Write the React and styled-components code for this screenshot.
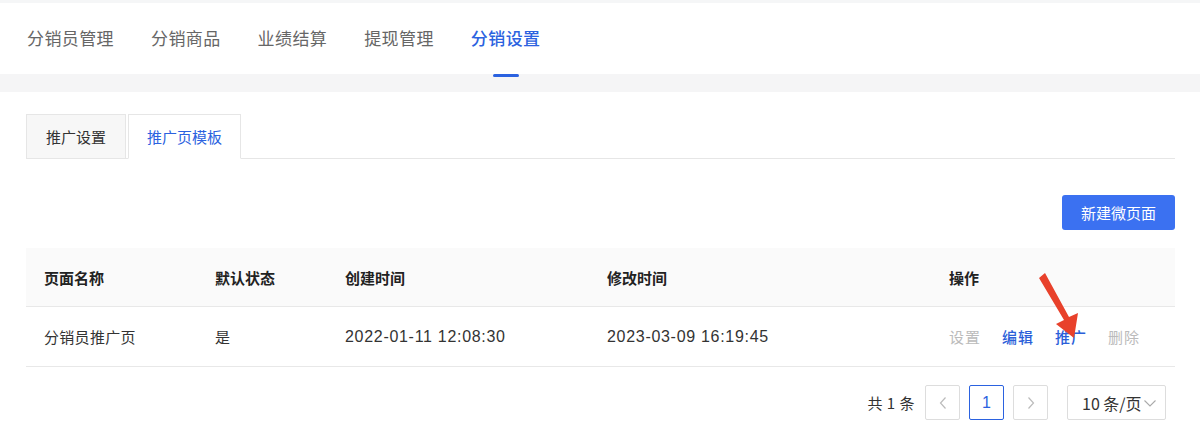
import React from 'react'
import styled, { createGlobalStyle } from 'styled-components'

const GlobalStyle = createGlobalStyle`
  html, body {
    margin: 0;
    padding: 0;
    background: #fff;
  }
  body {
    font-family: "Noto Sans CJK SC", "Liberation Sans", sans-serif;
    color: #333;
  }
  * { box-sizing: border-box; }
`

const Page = styled.div`
  position: relative;
  width: 1200px;
  height: 440px;
  overflow: hidden;
  background: #fff;
  border-top: 3px solid #f5f6f7;
`

const Header = styled.div`
  display: flex;
  align-items: stretch;
  height: 71px;
  padding-left: 27px;
  gap: 37px;
`

const NavItem = styled.div`
  position: relative;
  display: flex;
  align-items: center;
  font-size: 17px;
  letter-spacing: 0.4px;
  color: ${p => (p.active ? '#2b62e0' : '#666')};
  font-weight: ${p => (p.active ? 500 : 400)};
  padding-bottom: 2px;
  &::after {
    content: '';
    display: ${p => (p.active ? 'block' : 'none')};
    position: absolute;
    left: 50%;
    bottom: -3px;
    width: 26px;
    height: 3px;
    margin-left: -13px;
    border-radius: 2px;
    background: #2b62e0;
  }
`

const Band = styled.div`
  height: 18px;
  background: #f5f5f6;
`

const Content = styled.div`
  padding: 22px 25px 0 26px;
`

const Tabs = styled.div`
  display: flex;
  gap: 2px;
  border-bottom: 1px solid #e6e6e6;
  height: 45px;
`

const Tab = styled.div`
  display: flex;
  align-items: center;
  height: 45px;
  padding: 0 ${p => p.pad}px;
  font-size: 15px;
  border: 1px solid #e6e6e6;
  border-bottom: ${p => (p.active ? '1px solid #fff' : '1px solid #e6e6e6')};
  background: ${p => (p.active ? '#fff' : '#f7f7f7')};
  color: ${p => (p.active ? '#2b62e0' : '#333')};
`

const Toolbar = styled.div`
  display: flex;
  justify-content: flex-end;
  margin-top: 36px;
`

const PrimaryButton = styled.button`
  height: 35px;
  width: 113px;
  border: none;
  border-radius: 3px;
  background: #3b71f1;
  color: #fff;
  font-family: inherit;
  font-size: 15px;
`

const Table = styled.div`
  margin-top: 18px;
`

const Row = styled.div`
  display: grid;
  grid-template-columns: 171px 130px 262px 342px 1fr;
  height: ${p => (p.head ? 59 : 60)}px;
  background: ${p => (p.head ? '#fafafa' : '#fff')};
  border-bottom: 1px solid #e8e8e8;
`

const Cell = styled.div`
  display: flex;
  align-items: center;
  padding-left: 18px;
  font-size: 15px;
  letter-spacing: ${p => (p.head ? 0 : 0.3)}px;
  font-weight: ${p => (p.head ? 700 : 400)};
  color: ${p => (p.head ? '#222' : '#333')};
`

const DateText = styled.span`
  font-family: "Liberation Sans", "Noto Sans CJK SC", sans-serif;
  font-size: 16px;
  letter-spacing: 0.7px;
`

const Actions = styled.div`
  display: flex;
  gap: 21px;
`

const Action = styled.span`
  font-size: 15px;
  letter-spacing: 1px;
  color: ${p => (p.disabled ? '#bbb' : '#2b5fd9')};
  font-weight: ${p => (p.disabled ? 400 : 500)};
`

const Pager = styled.div`
  display: flex;
  justify-content: flex-end;
  align-items: center;
  margin-top: 18px;
  padding-right: 9px;
  gap: 9px;
`

const Total = styled.span`
  font-size: 15px;
  color: #333;
  margin-right: 1px;
  letter-spacing: 0.5px;
`

const PageBtn = styled.div`
  width: 35px;
  height: 35px;
  display: flex;
  align-items: center;
  justify-content: center;
  border: 1px solid ${p => (p.active ? '#2b62e0' : '#ddd')};
  border-radius: 2px;
  color: ${p => (p.active ? '#2b62e0' : '#bbb')};
  font-family: "Liberation Sans", sans-serif;
  font-size: 16px;
`

const SizeSelect = styled.div`
  margin-left: 10px;
  width: 99px;
  height: 35px;
  display: flex;
  align-items: center;
  padding-left: 14px;
  gap: 1px;
  border: 1px solid #ddd;
  border-radius: 2px;
  font-size: 16px;
  color: #333;
`

const Arrow = styled.svg`
  position: absolute;
  left: 0;
  top: 0;
  pointer-events: none;
`

const Chevron = ({ dir }) => (
  <svg width="10" height="14" viewBox="0 0 10 14">
    <path
      d={dir === 'left' ? 'M7.5 1.5 L2.5 7 L7.5 12.5' : 'M2.5 1.5 L7.5 7 L2.5 12.5'}
      fill="none"
      stroke="#bbb"
      strokeWidth="1.2"
    />
  </svg>
)

const navs = ['分销员管理', '分销商品', '业绩结算', '提现管理', '分销设置']

export default function App() {
  return (
    <Page>
      <GlobalStyle />
      <Header>
        {navs.map((n, i) => (
          <NavItem key={n} active={i === 4}>{n}</NavItem>
        ))}
      </Header>
      <Band />
      <Content>
        <Tabs>
          <Tab pad={19}>推广设置</Tab>
          <Tab pad={18} active>推广页模板</Tab>
        </Tabs>
        <Toolbar>
          <PrimaryButton>新建微页面</PrimaryButton>
        </Toolbar>
        <Table>
          <Row head>
            <Cell head>页面名称</Cell>
            <Cell head>默认状态</Cell>
            <Cell head>创建时间</Cell>
            <Cell head>修改时间</Cell>
            <Cell head>操作</Cell>
          </Row>
          <Row>
            <Cell>分销员推广页</Cell>
            <Cell>是</Cell>
            <Cell><DateText>2022-01-11 12:08:30</DateText></Cell>
            <Cell><DateText>2023-03-09 16:19:45</DateText></Cell>
            <Cell>
              <Actions>
                <Action disabled>设置</Action>
                <Action>编辑</Action>
                <Action>推广</Action>
                <Action disabled>删除</Action>
              </Actions>
            </Cell>
          </Row>
        </Table>
        <Pager>
          <Total>共 1 条</Total>
          <PageBtn><Chevron dir="left" /></PageBtn>
          <PageBtn active>1</PageBtn>
          <PageBtn><Chevron dir="right" /></PageBtn>
          <SizeSelect>
            10 条/页
            <svg width="14" height="10" viewBox="0 0 14 10">
              <path d="M1.5 2.5 L7 8 L12.5 2.5" fill="none" stroke="#aaa" strokeWidth="1.1" />
            </svg>
          </SizeSelect>
        </Pager>
      </Content>
      <Arrow width="1200" height="440" viewBox="0 0 1200 440">
        <polygon
          points="1039,275 1045,270 1069,314 1078,310 1074,335 1056,321 1064,317"
          fill="#e8412b"
        />
      </Arrow>
    </Page>
  )
}
